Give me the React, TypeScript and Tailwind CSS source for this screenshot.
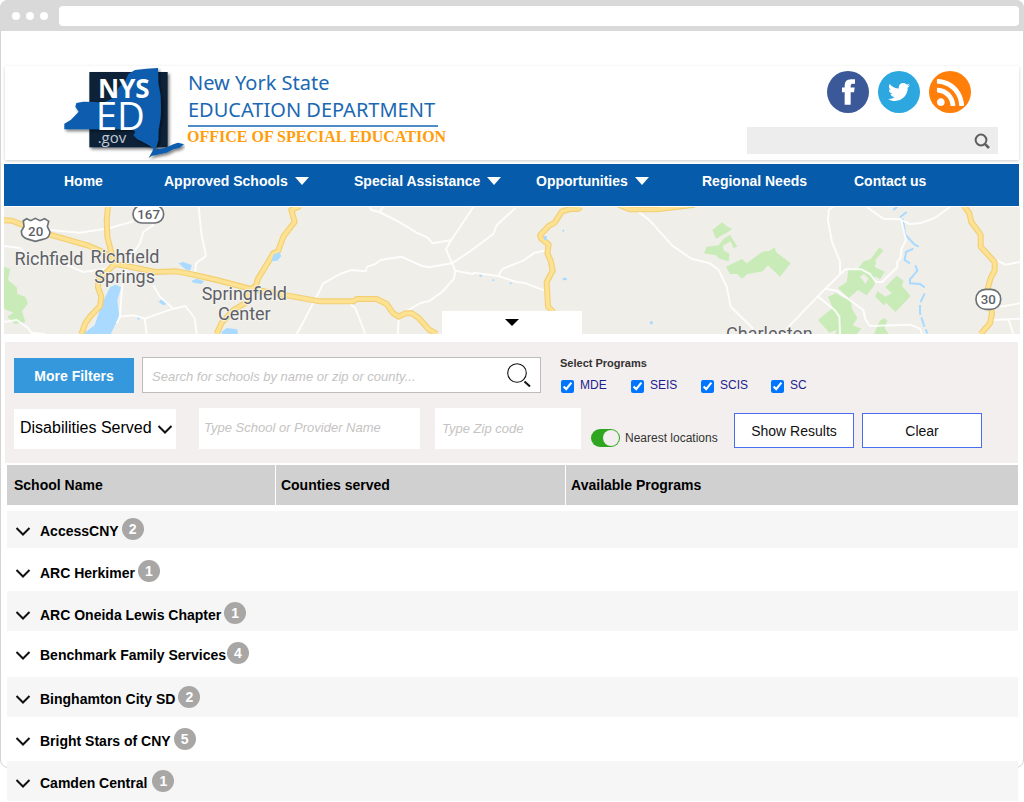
import { useState } from "react"
import { FaRss, FaTwitter } from "react-icons/fa"

const navItems = [
  { label: "Home", menu: false },
  { label: "Approved Schools", menu: true },
  { label: "Special Assistance", menu: true },
  { label: "Opportunities", menu: true },
  { label: "Regional Needs", menu: false },
  { label: "Contact us", menu: false },
]

const programs = ["MDE", "SEIS", "SCIS", "SC"]

const schools = [
  { name: "AccessCNY", count: 2, row: "h-[37px] pb-[2px]", gap: "gap-[3px]" },
  { name: "ARC Herkimer", count: 1, row: "h-[43px] pt-[2px]", gap: "gap-[3px]" },
  { name: "ARC Oneida Lewis Chapter", count: 1, row: "h-10 pt-1", gap: "gap-[3px]" },
  { name: "Benchmark Family Services", count: 4, row: "h-[46px] pb-[3px]", gap: "gap-px" },
  { name: "Binghamton City SD", count: 2, row: "h-10", gap: "gap-[3px]" },
  { name: "Bright Stars of CNY", count: 5, row: "h-11", gap: "gap-[3px]" },
  { name: "Camden Central", count: 1, row: "h-10", gap: "gap-[5px]" },
]

function Chevron() {
  return (
    <svg className="w-4 h-4 shrink-0" viewBox="0 0 16 16" fill="none" stroke="#111" strokeWidth="2" aria-hidden="true">
      <path d="M1.5 5 L8 11.5 L14.5 5" />
    </svg>
  )
}

function Logo() {
  return (
    <svg className="w-[121px] h-[94px] shrink-0" viewBox="42 18 363 282" role="img" aria-label="NYSED.gov">
      <defs>
        <filter id="logo-shadow" x="-10%" y="-10%" width="125%" height="125%">
          <feDropShadow dx="5" dy="6" stdDeviation="4" floodColor="#000" floodOpacity="0.5" />
        </filter>
      </defs>
      <g filter="url(#logo-shadow)">
        <rect x="118" y="36" width="235" height="226" fill="#0b2239" />
      </g>
      <g filter="url(#logo-shadow)">
        <path
          fill="#0a5cad"
          d="M43 208 L43 191 L62 180 L86 155 L76 140 L79 129 L100 125 L134 126 L160 128 L198 110 L203 86 L226 62 L235 42 L255 30 L290 26 L324 24 L325 70 L332 108 L333 150 L332 172 L326 210 L325 240 L317 268 L345 264 L372 252 L384 248 L402 253 L388 264 L370 268 L350 278 L306 287 L296 294 L308 272 L310 264 L285 249 L262 238 L250 226 L256 216 L248 208 Z"
        />
      </g>
      <g fill="#fff" fontFamily="'Open Sans', 'Noto Sans', sans-serif">
        <text x="144" y="115" fontSize="78" fontWeight="700">NYS</text>
        <text x="137" y="210" fontSize="115">ED</text>
        <text x="143" y="249" fontSize="45" fill="#c3cbd4">.gov</text>
      </g>
    </svg>
  )
}

// Map units are thirds of a pixel; the three groups are tiles placed side by side.
function AreaMap() {
  return (
    <svg className="block w-full h-[127px]" viewBox="12 21 3048 381" preserveAspectRatio="xMidYMin slice" role="img" aria-label="Map of schools">
      <rect x="12" y="21" width="3048" height="381" fill="#efeee9" />
      <g fill="#c8ebb8">
        <path d="M12 200 L30 206 L24 240 L50 262 L52 282 L76 290 L84 310 L66 334 L76 366 L44 372 L22 350 L40 338 L12 326 Z" />
        <g transform="translate(2040 0)">
          <path d="M97 90 L126 67 L142 80 L156 86 L150 92 L108 116 Z" />
          <path d="M72 160 L80 140 L116 136 L130 118 L150 104 L172 140 L160 144 L152 124 L128 138 L132 152 L148 160 L146 184 L118 176 L108 166 Z" />
          <path d="M138 200 L186 177 L200 190 L246 156 L270 152 L284 142 L288 156 L332 190 L300 230 L264 196 L248 214 L202 222 L186 236 L172 222 L150 222 Z" />
          <path d="M598 142 L610 152 L586 180 L588 190 L584 200 L614 216 L600 238 L584 228 L584 254 L560 286 L534 270 L506 294 L474 264 L500 246 L506 206 L532 208 L552 184 L572 178 Z" />
          <path d="M444 290 L468 280 L492 294 L512 296 L516 326 L532 354 L518 376 L544 386 L530 402 L466 402 L470 390 L448 398 L414 360 L458 324 Z" />
          <path d="M616 262 L650 227 L670 242 L666 258 L692 288 L646 336 L618 308 L612 316 L586 290 L592 274 L616 290 L636 280 Z" />
          <path d="M600 362 L612 354 L622 362 L614 384 L626 402 L582 402 Z" />
        </g>
      </g>
      <path d="M540 226 l12 -8 l14 14 l-10 16z" fill="#efeee9" transform="translate(2040 4)" />

      <g fill="#aadaff">
        <path d="M330 262 L346 254 L364 262 L352 300 L358 350 L332 402 L248 402 L284 376 L304 316 Z" />
        <path d="M536 190 L550 186 L576 196 L570 212 L556 208 Z" />
        <path d="M574 242 L590 236 L612 244 L604 252 L580 248 Z" />
        <path d="M476 306 L484 298 L500 312 L490 316 Z" />
        <path d="M664 396 L680 384 L712 388 L714 402 L666 402 Z" />
        <circle cx="416" cy="355" r="4" />
        <g transform="translate(1020 0)">
          <ellipse cx="674" cy="237" rx="7" ry="4" />
          <ellipse cx="934" cy="368" rx="5" ry="5" />
          <circle cx="422" cy="227" r="4" />
          <circle cx="460" cy="241" r="3" />
          <circle cx="512" cy="250" r="3" />
          <circle cx="670" cy="92" r="3" />
        </g>
      </g>
      <g transform="translate(2040 0)" fill="none" stroke="#aadaff" strokeWidth="6">
        <path d="M640 30 L652 20 M660 52 L680 36 M668 56 L676 104 L704 134 L716 140 M700 146 L678 156 L674 180 L690 190 M706 196 L712 212 L690 238 L690 250 L720 252 L734 262" />
        <path d="M734 280 L720 310 L720 340 L732 376 L742 400" strokeDasharray="30 8" />
      </g>

      <g fill="none" stroke="#fff" strokeOpacity="0.85" strokeWidth="6" strokeLinejoin="round">
        <path d="M12 138 L60 144 L90 180 L190 190 L250 216 L310 208 L340 196" />
        <path d="M150 90 L240 98 L330 84 L400 64" />
        <path d="M462 74 L430 96 L420 130 L384 180 L366 260 L360 350 L350 370" />
        <path d="M596 21 L604 100 L618 168 L588 190 L586 216" />
        <path d="M460 256 L480 290 L520 326 L556 318 L584 354 L590 402" />
        <path d="M520 326 L434 356 L402 346 L356 350 M434 356 L440 402" />
        <path d="M1020 222 L970 250 L936 316 L908 370 L890 402" />
        <path d="M12 366 L50 360 L84 384 L94 398 L136 402" />
        <g transform="translate(1020 0)">
          <path d="M90 21 L94 30 L118 36 L170 62 L230 98 L262 112 L278 130 L334 120" />
          <path d="M130 21 L118 36" />
          <path d="M400 21 L334 120 L318 148 L346 212 L342 236 L308 274 L270 302 L240 310 L180 344" />
          <path d="M526 24 L470 76 L460 102 L390 154 L336 190 L268 202 L246 198 L184 170 L122 180 L106 192 L82 200 L76 214 L34 210 L0 222" />
          <path d="M346 212 L398 222 L402 218 L474 228 L530 246 L552 248 L614 272" />
          <path d="M474 228 L488 206 L550 182 L584 158 L622 150" />
          <path d="M30 312 L46 324 L76 402 M176 350 L174 402" />
          <path d="M896 36 L930 62 L996 136 L1054 176 L1110 190 L1136 210 L1160 260 L1172 320 L1240 386" />
        </g>
        <g transform="translate(2040 0)">
          <path d="M460 21 L446 30 L444 60 L456 126 L480 184 L480 222" />
          <path d="M560 21 L610 56 L660 58 L690 72 L720 70 L764 54 L810 21" />
          <path d="M664 60 L678 120 L664 148 L662 174 L652 184 L652 202 L606 246 L588 246 L570 222 L544 208 L496 208 L436 266 L320 386" />
          <path d="M436 266 L470 272 L550 330 L556 358 L570 378 L690 374 L720 386 L726 402" />
          <path d="M412 288 L464 330 L478 350 L480 402" />
          <path d="M948 180 L976 194 L1020 186 M960 320 L1020 310 M940 360 L1020 356 M986 360 L1000 402" />
        </g>
      </g>

      {[
        { color: "#f3cf73", width: "18" },
        { color: "#fde293", width: "11" },
      ].map((line) => (
        <g key={line.width} fill="none" stroke={line.color} strokeWidth={line.width} strokeLinejoin="round">
          <path d="M12 61 L36 62 L76 78 L150 104 L262 136 L310 156 L346 192 L400 202 L466 216 L530 214 L580 224 L650 240 L750 266 L860 286 L960 304 L1060 304 L1070 297 L1130 297 L1160 312 L1178 338 L1196 350 L1216 340 L1236 340 L1256 354 L1286 388 L1310 402" />
          <path d="M324 21 L320 60 L322 110 L332 150 L344 192 L316 220 L296 236 L294 262 L304 290 L300 318 L270 350 L256 370 L244 402" />
          <path d="M900 18 L874 30 L884 66 L850 110 L834 154 L820 160 L800 194 L774 236 L768 256 L744 276 L742 306 L700 330 L664 370 L650 402" />
          <g transform="translate(1020 0)">
            <path d="M722 20 L714 27 L690 27 L666 34 L644 68 L626 78 L600 106 L604 116 L626 134 L622 160 L632 182 L638 212 L620 246 L624 320 L640 336" />
            <path d="M836 14 L870 28 L950 28 L1064 14" />
          </g>
          <g transform="translate(2040 0)">
            <path d="M852 18 L868 40 L874 66 L902 104 L902 140 L944 186 L944 212 L932 234 L922 270 L936 340 L930 370 L902 402" />
          </g>
        </g>
      ))}
      <g fill="#aadaff">
        <path d="M814 184 L820 164 L838 156 L844 168 L832 182 Z" />
        <rect x="1632" y="108" width="8" height="12" />
      </g>

      <g stroke="#6d7276" strokeWidth="5" fill="#fff">
        <path d="M70 62 L80 56 L92 62 L106 55 L120 62 L134 56 L146 64 L142 80 L150 96 Q148 116 128 118 L106 124 L86 118 Q64 114 64 94 L72 80 Z" />
        <rect x="399" y="16" width="92" height="53" rx="26" />
        <rect x="2928" y="268" width="74" height="60" rx="29" />
      </g>
      <g fill="#5d6166" fontFamily="Roboto, sans-serif" textAnchor="middle">
        <g fontSize="40" fontWeight="500">
          <text x="107" y="108">20</text>
          <text x="446" y="56">167</text>
          <text x="2965" y="313">30</text>
        </g>
        <g fontSize="54" stroke="#f6f5f2" strokeWidth="5" paintOrder="stroke">
          <text x="147" y="196">Richfield</text>
          <text x="375" y="188">Richfield</text>
          <text x="374" y="248">Springs</text>
          <text x="733" y="300">Springfield</text>
          <text x="733" y="361">Center</text>
          <text x="2308" y="421">Charleston</text>
        </g>
      </g>
    </svg>
  )
}

function BrowserBar() {
  return (
    <div className="h-[31px] rounded-t-lg bg-[#d9d9d9] flex items-center pl-3 pr-[5px]">
      <div className="flex gap-[6px] mr-[11px]">
        {[...Array(3)].map((_, i) => (
          <span key={i} className="w-2 h-2 rounded-full bg-white" />
        ))}
      </div>
      <input aria-label="Address" className="flex-1 h-5 rounded bg-white px-2 text-xs outline-none" />
    </div>
  )
}

function Header() {
  return (
    <header className="mx-px mt-[35px] h-[94px] bg-white shadow-[0_1px_3px_rgba(0,0,0,0.2)] flex justify-between pl-[59px] pr-[21px]">
      <div className="flex">
        <Logo />
        <div className="pl-[2px] pt-1 text-[#1b68b3] font-['Noto_Sans','Open_Sans',sans-serif]">
          <p className="pl-px text-[20px] leading-[26px]">New York State</p>
          <h1 className="pl-px text-[20px] leading-[28px] whitespace-nowrap">EDUCATION DEPARTMENT</h1>
          <div className="ml-px mt-px mr-2 h-[2px] bg-[#4d8bc9]" />
          <p className="font-['Liberation_Serif',serif] font-bold text-[16px] leading-[19px] text-[#ff9d0a] whitespace-nowrap">
            OFFICE OF SPECIAL EDUCATION
          </p>
        </div>
      </div>
      <div className="w-[251px] pt-[5px]">
        <div className="flex justify-end gap-[9px] pr-[27px] text-white">
          <a href="#facebook" aria-label="Facebook" className="w-[42px] h-[42px] rounded-full bg-[#3b5998] flex items-center justify-center">
            <svg className="w-[13px] h-[26px]" viewBox="0 0 39 77" fill="currentColor" aria-hidden="true">
              <path d="M8 77 V39 H0 V25 H8 V19 Q8 0 27 0 H39 V14 H32 Q26 14 26 20 V25 H38 L36 39 H26 V77 Z" />
            </svg>
          </a>
          <a href="#twitter" aria-label="Twitter" className="w-[42px] h-[42px] rounded-full bg-[#2ca7e0] flex items-center justify-center">
            <FaTwitter size={22} />
          </a>
          <a href="#rss" aria-label="RSS" className="w-[42px] h-[42px] rounded-full bg-[#ff7f0a] flex items-center justify-center">
            <FaRss size={31} />
          </a>
        </div>
        <div className="mt-[14px] h-[27px] bg-[#ededed] flex items-center pr-2">
          <input aria-label="Search site" className="flex-1 h-full px-2 text-sm bg-transparent outline-none" />
          <button type="button" aria-label="Search">
            <svg className="w-4 h-4" viewBox="0 0 16 16" fill="none" stroke="#5f5f5f" aria-hidden="true">
              <circle cx="7" cy="7" r="5.4" strokeWidth="2" />
              <path d="M10.8 10.8 L15 15" strokeWidth="2.6" />
            </svg>
          </button>
        </div>
      </div>
    </header>
  )
}

function Nav() {
  return (
    <nav className="mt-1 mr-px h-[42px] bg-[#065baa] pl-[60px] pb-2 grid grid-cols-[100fr_190fr_182fr_166fr_152fr_165fr] items-center text-white text-sm font-bold">
      {navItems.map((item) => (
        <a key={item.label} href="#" className="flex items-center gap-[7px] whitespace-nowrap">
          {item.label}
          {item.menu && (
            <svg className="w-[14px] h-2" viewBox="0 0 14 8" fill="currentColor" aria-hidden="true">
              <path d="M0 0 H14 L7 8 Z" />
            </svg>
          )}
        </a>
      ))}
    </nav>
  )
}

function Filters() {
  const [nearest, setNearest] = useState(true)

  return (
    <form className="mt-2 ml-px mr-[2px] h-[121px] bg-[#f3efee] pl-[9px] pr-9 pt-[15px]" onSubmit={(e) => e.preventDefault()}>
      <div className="flex items-start">
        <button type="button" className="mt-px w-[120px] h-[35px] bg-[#3598dc] text-white text-sm font-bold">
          More Filters
        </button>
        <div className="ml-2 flex-1 h-9 bg-white border border-[#bfbbbb] flex items-center px-[9px]">
          <input
            aria-label="Search for schools"
            placeholder="Search for schools by name or zip or county..."
            className="flex-1 min-w-0 pt-[3px] text-[13px] italic outline-none placeholder:text-[#c5c3c3]"
          />
          <button type="submit" aria-label="Search schools">
            <svg className="w-6 h-6" viewBox="0 0 24 24" fill="none" stroke="#111" aria-hidden="true">
              <circle cx="10" cy="10" r="9.3" strokeWidth="1.1" />
              <path d="M17.5 18.5 L23 23.5" strokeWidth="2" />
            </svg>
          </button>
        </div>
        <fieldset className="ml-[19px] w-[422px] -mt-px">
          <legend className="text-[11px] leading-[14px] font-bold text-[#333]">Select Programs</legend>
          <div className="mt-2 flex pl-px">
            {programs.map((program) => (
              <label key={program} className="w-[70px] flex gap-[6px] text-xs leading-[14px] text-[#1d1d8f]">
                <input type="checkbox" defaultChecked className="mt-[2px] w-[13px] h-[13px] accent-[#0075ff]" />
                {program}
              </label>
            ))}
          </div>
        </fieldset>
      </div>

      <div className="mt-[15px] flex items-start">
        <div className="relative mt-px w-[162px] h-10">
          <select aria-label="Disabilities Served" className="w-full h-full pl-[6px] pb-[3px] bg-white text-black text-base appearance-none outline-none">
            <option>Disabilities Served</option>
          </select>
          <span className="absolute right-[3px] top-3 pointer-events-none">
            <Chevron />
          </span>
        </div>
        <input
          aria-label="School or provider name"
          placeholder="Type School or Provider Name"
          className="ml-[23px] flex-1 min-w-0 h-[41px] pl-[5px] pb-[2px] bg-white text-[13px] italic outline-none placeholder:text-[#c5c3c3]"
        />
        <input
          aria-label="Zip code"
          placeholder="Type Zip code"
          className="ml-[15px] w-[146px] h-[41px] pl-[7px] bg-white text-[13px] italic outline-none placeholder:text-[#c5c3c3]"
        />
        <label className="ml-[10px] mt-[21px] w-[143px] flex items-center gap-[5px] text-xs text-[#333] whitespace-nowrap">
          <input
            type="checkbox"
            role="switch"
            checked={nearest}
            onChange={() => setNearest(!nearest)}
            className="w-[29px] h-[18px] shrink-0 appearance-none rounded-full bg-gray-400 checked:bg-[#2fa61f] flex items-center px-px before:w-4 before:h-4 before:rounded-full before:bg-[#f3efee] checked:before:ml-auto"
          />
          Nearest locations
        </label>
        <div className="mt-[5px] flex gap-2">
          <button type="submit" className="w-[120px] h-[35px] bg-white border border-[#4a6cf0] text-sm text-[#111]">
            Show Results
          </button>
          <button type="reset" className="w-[120px] h-[35px] bg-white border border-[#4a6cf0] text-sm text-[#111]">
            Clear
          </button>
        </div>
      </div>
    </form>
  )
}

function SchoolTable() {
  return (
    <div className="mt-[2px] ml-[3px] mr-[2px]">
      <table className="w-full table-fixed border-separate border-spacing-0 text-sm font-bold text-black">
        <thead>
          <tr className="h-[46px] text-left">
            <th className="w-[26.6%] pl-[7px] bg-[#d0d0d0] border-b-[6px] border-r border-white">School Name</th>
            <th className="w-[28.7%] pl-[5px] bg-[#d0d0d0] border-b-[6px] border-r border-white">Counties served</th>
            <th className="pl-[5px] bg-[#d0d0d0] border-b-[6px] border-white">Available Programs</th>
          </tr>
        </thead>
        <tbody>
          {schools.map((school) => (
            <tr key={school.name} className="odd:bg-[#f6f6f6] even:bg-white">
              <td colSpan={3} className="p-0">
                <div className={`flex items-center pl-2 ${school.row}`}>
                  <button type="button" aria-label={`Expand ${school.name}`} className="mt-1">
                    <Chevron />
                  </button>
                  <div className={`ml-[9px] flex items-center ${school.gap}`}>
                    <span className="mt-1">{school.name}</span>
                    <span className="w-[22px] h-[22px] rounded-full bg-[#a8a7a6] text-white flex items-center justify-center">
                      {school.count}
                    </span>
                  </div>
                </div>
              </td>
            </tr>
          ))}
        </tbody>
      </table>
    </div>
  )
}

export default function App() {
  return (
    <div className="relative bg-white font-['Liberation_Sans',Arial,sans-serif]">
      {/* window outline, the last rows run past its bottom edge */}
      <div className="absolute inset-x-0 top-0 bottom-[33px] rounded-lg border border-[#d4d4d4] pointer-events-none" />
      <div className="relative">
        <BrowserBar />
        <div className="px-1">
          <Header />
          <Nav />
          <div className="relative mt-px">
            <AreaMap />
            <button type="button" aria-label="Collapse map" className="absolute bottom-0 left-1/2 -translate-x-1/2 w-[140px] h-[23px] bg-white flex items-center justify-center">
              <svg className="w-[14px] h-[7px]" viewBox="0 0 14 7" aria-hidden="true">
                <path d="M0 0 H14 L7 7 Z" />
              </svg>
            </button>
          </div>
          <Filters />
          <SchoolTable />
        </div>
      </div>
    </div>
  )
}
